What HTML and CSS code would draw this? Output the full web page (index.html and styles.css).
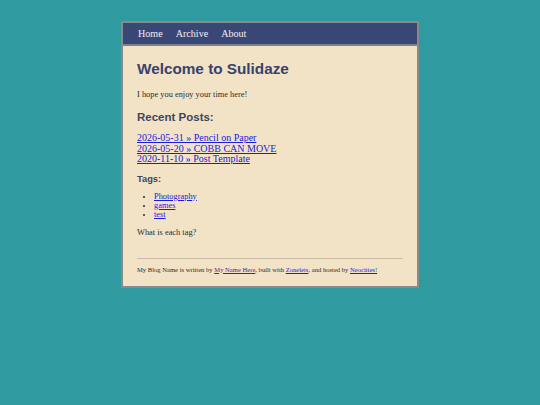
FILE: index.html
```html
<!DOCTYPE html>
<html>
<head>
<meta charset="utf-8">
<link rel="stylesheet" href="styles.css">
</head>
<body>
<div class="box">
  <nav class="nav">
    <a href="#">Home</a>
    <a href="#">Archive</a>
    <a href="#">About</a>
  </nav>
  <main class="content">
    <h1 class="title">Welcome to Sulidaze</h1>
    <p class="intro">I hope you enjoy your time here!</p>
    <h2 class="sub">Recent Posts:</h2>
    <div class="posts">
      <a href="#">2026-05-31 » Pencil on Paper</a>
      <a href="#">2026-05-20 » COBB CAN MOVE</a>
      <a href="#">2020-11-10 » Post Template</a>
    </div>
    <h3 class="tags-h">Tags:</h3>
    <ul class="tags">
      <li><a href="#">Photography</a></li>
      <li><a href="#">games</a></li>
      <li><a href="#">test</a></li>
    </ul>
    <p class="q">What is each tag?</p>
    <footer class="foot">
      My Blog Name is written by <a class="visited" href="#">My Name Here</a>, built with <a href="#">Zonelets</a>, and hosted by <a href="#">Neocities!</a>
    </footer>
  </main>
</div>
</body>
</html>
```
FILE: styles.css
```css
html, body {
  margin: 0;
  padding: 0;
}
body {
  background: #2f9a9f;
  font-family: "Liberation Serif", serif;
  color: #2a2a2a;
}
.box {
  width: 294px;
  margin: 21px auto 0;
  border: 2px solid #8a8a8a;
  background: #f2e3c7;
}
.nav {
  background: #394777;
  border-bottom: 2px solid #7d8291;
  height: 21px;
  display: flex;
  align-items: center;
  gap: 13px;
  padding-left: 15px;
}
.nav a {
  color: #eeeef5;
  text-decoration: none;
  font-family: "Liberation Serif", serif;
  font-size: 10.1px;
}
.content {
  padding: 13px 14px 12px 14px;
}
.title {
  font-family: "Liberation Sans", Arial, sans-serif;
  font-weight: bold;
  font-size: 15.3px;
  color: #38426d;
  margin: 0 0 10px;
  line-height: 20px;
}
.intro, .q {
  margin: 0;
  line-height: 12px;
  font-family: "Liberation Serif", serif;
  font-size: 8.4px;
}
.sub {
  font-family: "Liberation Sans", Arial, sans-serif;
  font-weight: bold;
  font-size: 11.5px;
  color: #3d4560;
  margin: 9px 0 9px;
  line-height: 14px;
}
.posts {
  display: flex;
  flex-direction: column;
  line-height: 10.5px;
  font-family: "Liberation Serif", serif;
  font-size: 10px;
}
.posts a, .tags a, .foot a {
  color: #1a1ae0;
}
.foot a.visited {
  color: #5a1a8a;
}
.tags-h {
  font-family: "Liberation Sans", Arial, sans-serif;
  font-weight: bold;
  font-size: 9.3px;
  color: #3d4560;
  margin: 8px 0 7px;
  line-height: 12px;
}
.tags {
  margin: 0 0 8px;
  padding-left: 17px;
  font-family: "Liberation Serif", serif;
  font-size: 8.4px;
  line-height: 9px;
}
.q {
  margin-bottom: 19px;
}
.foot {
  border-top: 1px solid #c9bda6;
  padding-top: 6px;
  font-family: "Liberation Serif", serif;
  font-size: 6.6px;
  line-height: 9px;
}
```
